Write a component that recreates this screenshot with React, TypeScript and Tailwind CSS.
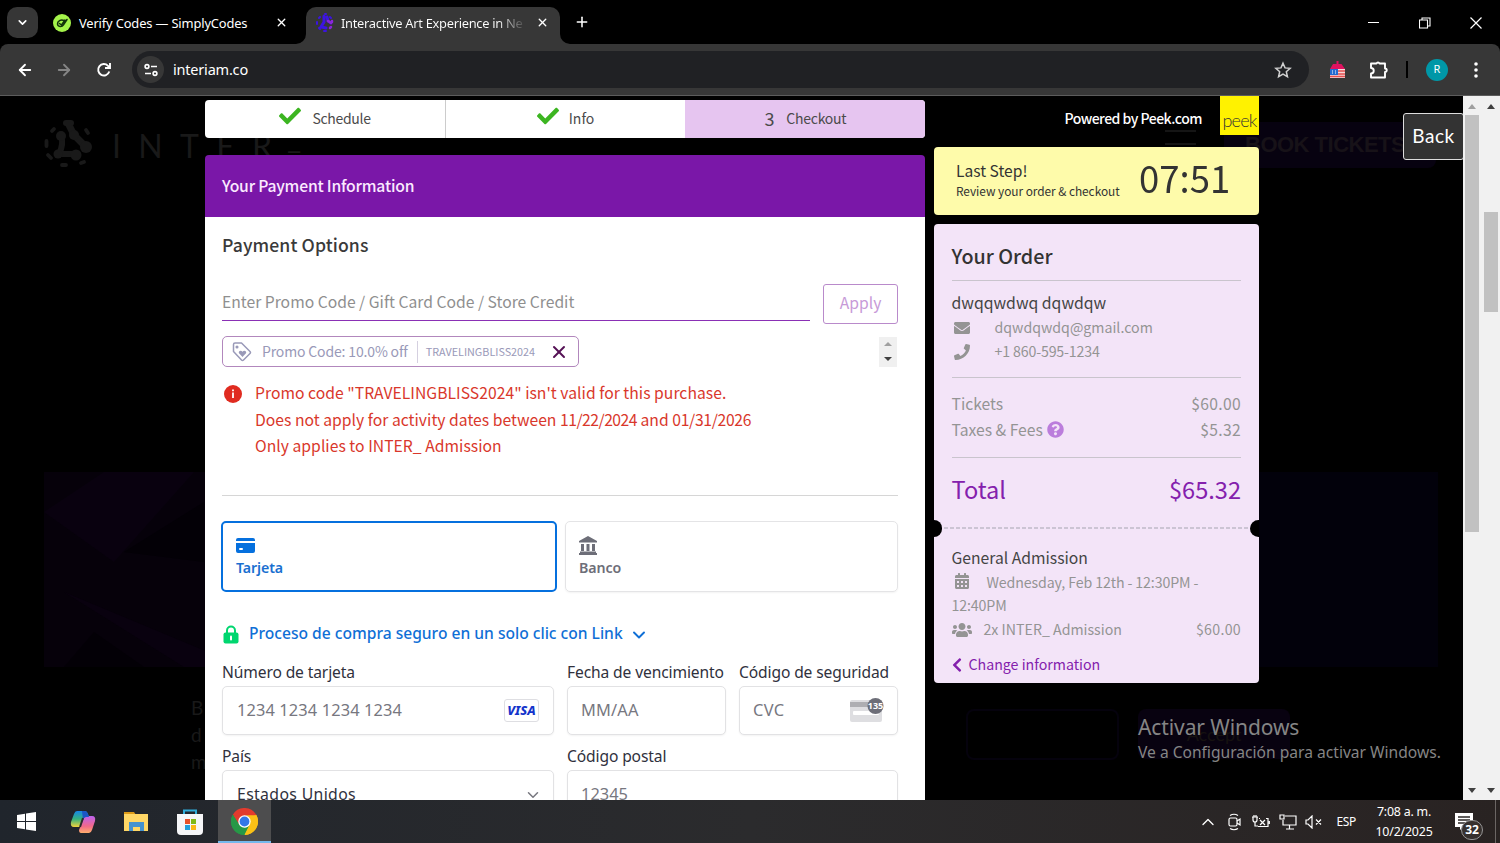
import type { ReactNode } from "react";
import {
    FaCalendarAlt,
    FaCheck,
    FaChevronLeft,
    FaEnvelope,
    FaPhone,
    FaQuestionCircle,
    FaUsers,
} from "react-icons/fa";
import { ArrowLeft, ArrowRight, ChevronDown, ChevronUp, Plus, X } from "lucide-react";

const ui = "font-['Noto_Sans','Open_Sans',sans-serif]";
const peek = "font-['Noto_Sans_CJK_JP','Noto_Sans_CJK_SC',sans-serif]";

function TabBar() {
    return (
        <div className="flex h-11 shrink-0 items-end bg-black text-white">
            <div className="mb-[6px] ml-[7px] flex h-[31px] w-[31px] items-center justify-center rounded-[10px] bg-[#363636]">
                <ChevronDown size={13} strokeWidth={3} />
            </div>
            <div className="flex h-[36px] w-[250px] items-center pb-[7px] pl-[15px]">
                <svg width="18" height="18" viewBox="0 0 18 18" className="shrink-0">
                    <circle cx="9" cy="9" r="9" fill="#a4f34a" />
                    <path d="M11 6.500C8 5 4.300 7 4.500 10c.3 3 4.500 3.300 6 .8L14 5.500M6.500 9.500l2 1.500L12 6" fill="none" stroke="#12330a" strokeWidth="1.500" strokeLinecap="round" />
                </svg>
                <span className="ml-2 w-[190px] text-[12.900px] leading-[20px] tracking-[-0.150px] whitespace-nowrap">Verify Codes — SimplyCodes</span>
                <X size={13} strokeWidth={2.500} className="ml-[6px] shrink-0" />
            </div>
            <div className="relative ml-[18px] flex h-[37px] w-[254px] items-center rounded-t-[10px] bg-[#373737] pb-[5px] pl-[10px]">
                <svg className="absolute bottom-0 -left-[10px]" width="10" height="10"><path d="M10 0v10H0A10 10 0 0 0 10 0Z" fill="#373737" /></svg>
                <svg className="absolute -right-[10px] bottom-0" width="10" height="10"><path d="M0 0v10h10A10 10 0 0 1 0 0Z" fill="#373737" /></svg>
                <svg width="18" height="20" viewBox="0 0 18 20" className="shrink-0">
                    <g fill="none" stroke="#3c14e0" strokeLinecap="round">
                        <path d="M8 3v6l-3 5 5 1M11 4l1 4 3 2" strokeWidth="3" />
                        <path d="M3 5l1-1M1 9v2M3 15l1 1M8 18h2M15 5l-1-1M9 1h1" strokeWidth="2" />
                        <path d="M12 8l3 2M14 15l1-1M16 8v1" stroke="#8a26d8" strokeWidth="2.500" />
                    </g>
                </svg>
                <span className="ml-[7px] h-[20px] w-[184px] overflow-hidden bg-linear-to-r from-white from-85% to-[#444] bg-clip-text text-[12.900px] leading-[20px] tracking-[-0.300px] whitespace-nowrap text-transparent">
                    Interactive Art Experience in Ne
                </span>
                <X size={13} strokeWidth={2.500} className="mt-[-1px] ml-[11px] shrink-0" />
            </div>
            <Plus size={16} strokeWidth={2.300} className="mb-[14px] ml-[14px]" />
            <div className="mb-[15px] ml-auto flex items-center gap-[39px] pr-[18px]">
                <svg width="12" height="12"><path d="M0 5.500h11" stroke="#fff" /></svg>
                <svg width="12" height="12" viewBox="0 0 12 12" fill="none" stroke="#fff" strokeWidth="1.100"><path d="M.5 3h8v8h-8zM3 3V1h8v8H9" /></svg>
                <svg width="12" height="12" viewBox="0 0 12 12" stroke="#fff" strokeWidth="1.200"><path d="M.5.5l11 11M11.500.5l-11 11" /></svg>
            </div>
        </div>
    );
}

function Toolbar() {
    return (
        <div className="flex h-[52px] shrink-0 items-center rounded-t-[8px] border-b border-[#5c5c5c] bg-[#373737] text-white">
            <ArrowLeft size={18} strokeWidth={2.400} className="ml-4" />
            <ArrowRight size={18} strokeWidth={2.400} className="ml-[21px] text-[#858585]" />
            <svg width="16" height="16" viewBox="0 0 16 16" className="ml-[23px]" fill="none" stroke="#fff" strokeWidth="1.900">
                <path d="M13.300 9.500A5.700 5.700 0 1 1 12 3.800l1.500 1.600" />
                <path d="M14 1v5H9" />
            </svg>
            <div className="ml-[20px] flex h-[37px] w-[1177px] items-center rounded-full bg-[#202124] pl-[5px]">
                <div className="flex h-[27px] w-[27px] items-center justify-center rounded-full bg-[#373737]">
                    <svg width="14" height="14" viewBox="0 0 14 14" fill="none" stroke="#fff" strokeWidth="1.600">
                        <circle cx="3" cy="3.500" r="1.900" /><path d="M7 3.500h6M1 10.500h6" /><circle cx="11" cy="10.500" r="1.900" />
                    </svg>
                </div>
                <span className="ml-[9px] text-[14.500px] tracking-[-0.200px]">interiam.co</span>
                <svg width="18" height="18" viewBox="0 0 24 24" className="mr-[17px] ml-auto" fill="none" stroke="#d0d0d0" strokeWidth="2">
                    <path d="M12 3l2.700 6.200 6.800.6-5.100 4.500 1.500 6.700L12 17.500 6.100 21l1.500-6.700-5.100-4.500 6.800-.6z" />
                </svg>
            </div>
            <svg width="17" height="18" viewBox="0 0 17 18" className="ml-[20px]">
                <path d="M7.500 0h2v3h3l3.500 5H1l3-5h3.500z" fill="#e0115f" />
                <path d="M1 8h15v9H1z" fill="#f7d9da" /><path d="M1 8h8v6H1z" fill="#246ad0" />
                <path d="M9 10h7M9 13h7M1 15.500h15" stroke="#e45050" strokeWidth="1.300" />
                <path d="M3 10h1M6 10h1M3 12h1M6 12h1" stroke="#fff" />
            </svg>
            {/* extensions puzzle piece */}
            <svg width="20" height="20" viewBox="0 0 20 20" className="ml-[23px]" fill="none" stroke="#fff" strokeWidth="1.900" strokeLinejoin="round">
                <path d="M2 3.500h5.500a1.600 1.600 0 0 1 3 0H16v5a1.600 1.600 0 0 1 0 3.500v5.500H2V13.500a2.700 2.700 0 0 0 0-5.500z" />
            </svg>
            <div className="ml-[17px] h-[17px] w-[2px] bg-black" />
            <div className="ml-[18px] flex h-[22px] w-[22px] items-center justify-center rounded-full bg-[#0097a7] text-[11px]">R</div>
            <svg width="4" height="18" viewBox="0 0 4 18" className="ml-[26px]" fill="#fff"><circle cx="2" cy="3" r="1.800" /><circle cx="2" cy="9" r="1.800" /><circle cx="2" cy="15" r="1.800" /></svg>
        </div>
    );
}

/* the dimmed site that shows behind the booking overlay */
function SiteBackdrop() {
    return (
        <div className="absolute inset-0 overflow-hidden bg-black font-['Lato',sans-serif] text-[#191919]">
            <svg width="50" height="50" viewBox="0 0 50 50" className="absolute top-[23px] left-[44px]" fill="#191919" stroke="#191919" strokeLinecap="round">
                <path d="M17 17q3 8-2 18M14 35h18" strokeWidth="6" fill="none" />
                <path d="M25 6l5 10 11 11" strokeWidth="7" fill="none" />
                <circle cx="17" cy="17" r="5" stroke="none" /><circle cx="32" cy="36" r="5.500" stroke="none" />
                <circle cx="42" cy="28" r="6" stroke="none" /><circle cx="14" cy="35" r="4.500" stroke="none" />
                <circle cx="30" cy="16" r="5" stroke="none" /><path d="M22 4h5" strokeWidth="6" />
                <path d="M8 12l2-2M2.500 22v5M4 36l3 3M18 46h4M37 44l3-1M42 11l2 3" strokeWidth="3.800" fill="none" />
            </svg>
            <div className="absolute top-[26px] left-[112px] text-[32px] tracking-[17.300px]">INTER</div>
            <div className="absolute top-[18px] left-[287px] text-[31px]">_</div>
            <div className="absolute top-[26px] left-[1224px] h-[46px] w-[212px] rounded-lg bg-[#070210]" />
            <div className="absolute top-[32px] left-[1245px] font-['Liberation_Sans',sans-serif] text-[22px] font-bold tracking-[-0.500px] text-[#171218]">BOOK TICKETS</div>
            <div className="absolute top-[34px] left-[1165px] h-[15px] w-[31px] border-y-2 border-[#151515]" />
            <div className="absolute top-[376px] left-[44px] h-[195px] w-[300px] bg-[#06010a]">
                <svg width="300" height="195"><path d="M0 40L60 0h90L70 90zM20 120l120 75h60z" fill="#09010f" /><path d="M80 80l80-50v60zM50 160l50 35H20z" fill="#030006" /></svg>
            </div>
            <div className="absolute top-[376px] left-[1100px] h-[195px] w-[338px] bg-[#02010b]" />
            <div className="absolute top-[598px] left-[191px] text-[19px] leading-[27px]">B<br />d<br />m</div>
            <div className="absolute top-[613px] left-[966px] h-[51px] w-[153px] rounded-lg border-2 border-[#05020d]" />
            <div className="absolute top-[613px] left-[1138px] flex h-[50px] w-[152px] items-center justify-center rounded-lg bg-[#080210] text-[18px] text-[#161210]">Accept</div>
        </div>
    );
}

function Steps() {
    return (
        <div className="flex h-[38px] shrink-0 overflow-hidden rounded-[4px] bg-white pb-[2px] text-[14px] leading-[20px] text-[#4b4b4b]">
            <div className="-mb-[2px] flex w-[241px] items-center justify-center gap-[11px] border-r border-[#ccc] pb-[2px] tracking-[-0.300px]">
                <FaCheck size={22} className="mt-[-4px] text-[#3cb521]" />Schedule
            </div>
            <div className="flex w-[239px] items-center justify-center gap-[10px]">
                <FaCheck size={22} className="mt-[-4px] text-[#3cb521]" />Info
            </div>
            <div className="-mb-[2px] flex w-[240px] items-center justify-center gap-[12px] bg-[#e6c5f0] pr-px pb-[2px] pl-[2px] tracking-[-0.250px]">
                <span className="text-[18px]">3</span>Checkout
            </div>
        </div>
    );
}

function PromoCode() {
    return (
        <>
            <div className="mt-[25px] flex h-[40px] justify-between">
                <div className="h-[37px] w-[588px] border-b border-[#8a30b5] text-[15.700px] leading-[36px] text-[#8f8f8f]">
                    Enter Promo Code / Gift Card Code / Store Credit
                </div>
                <button className="w-[75px] rounded-[3px] border border-[#b98acb] pb-[2px] text-[15.700px] text-[#c79ad8]">Apply</button>
            </div>
            <div className="mt-[12px] flex items-center justify-between">
                <div className="flex h-[31px] w-[357px] items-center rounded-[5px] border border-[#b287bd] text-[#9999b8]">
                    <svg width="20" height="20" viewBox="0 0 20 20" className="ml-[9px]" fill="none" stroke="currentColor" strokeWidth="1.500" strokeLinejoin="round">
                        <path d="M1.500 2.500Q1.500 1 3 1h6.500l8.500 8.500q1 1 0 2l-6.500 6.500q-1 1-2 0L1.500 9.500z" />
                        <circle cx="5" cy="5" r=".8" fill="currentColor" />
                        <path d="M10.500 15L7 11.200c-1-1.700 1.700-3.700 3.500-1.500 1.800-2.200 4.500-.2 3.500 1.500z" fill="currentColor" stroke="none" />
                    </svg>
                    <span className="ml-[10px] text-[14px] tracking-[-0.150px]">Promo Code: 10.0% off</span>
                    <span className="ml-[9px] h-[22px] w-px bg-[#d5d0e0]" />
                    <span className="ml-[8px] text-[10.800px]">TRAVELINGBLISS2024</span>
                    <X size={20} strokeWidth={2.400} className="ml-[14px] text-[#551155]" />
                </div>
                <div className="mr-px flex h-[30px] w-[18px] flex-col items-center justify-around bg-[#f0f0f0]">
                    <span className="border-x-4 border-b-4 border-x-transparent border-b-[#a0a0a0]" />
                    <span className="border-x-4 border-t-4 border-x-transparent border-t-[#404040]" />
                </div>
            </div>
            <div className="mt-[13px] flex h-[80px] text-[15.700px] leading-[26.500px] text-[#d9372b]">
                <svg width="18" height="18" viewBox="0 0 18 18" className="mt-[5px] mr-[13px] ml-[2px]">
                    <circle cx="9" cy="9" r="9" fill="#e02b20" /><path d="M9 7.500v5.500M9 4.500v1.800" stroke="#fff" strokeWidth="1.800" />
                </svg>
                <div>
                    <p className="tracking-[0.030px]">Promo code "TRAVELINGBLISS2024" isn't valid for this purchase.</p>
                    <p className="tracking-[0.020px]">Does not apply for activity dates between <span className="tracking-[-0.500px]">11/22/2024</span> and <span className="tracking-[-0.300px]">01/31/2026</span></p>
                    <p className="tracking-[0.030px]">Only applies to INTER_ Admission</p>
                </div>
            </div>
        </>
    );
}

function Field({ label, width, children }: { label: string; width: string; children: ReactNode }) {
    return (
        <div className={`flex flex-col ${width}`}>
            <div className="h-[27px] text-[15.600px] leading-[26px] tracking-[-0.120px] whitespace-nowrap text-[#30313d]">{label}</div>
            <div className="flex h-[49px] items-center rounded-[5px] border border-[#e2e2e4] bg-white px-[14px] text-[16.400px] text-[#77777f] shadow-xs">
                {children}
            </div>
        </div>
    );
}

function CardForm() {
    return (
        <div className={ui}>
            <div className="-ml-px flex h-[71px] gap-[8px] text-[14.200px] font-semibold">
                <div className="flex w-[336px] flex-col rounded-[5px] border-2 border-[#0570de] px-[13px] pt-[15px] text-[#1a6fd0]">
                    <svg width="19" height="15" viewBox="0 0 19 15" fill="#0570de"><path d="M0 3V2q0-2 2-2h15q2 0 2 2v1zM0 5h19v8q0 2-2 2H2q-2 0-2-2z" /><rect x="3" y="10" width="4" height="2" rx="1" fill="#fff" /></svg>
                    <span className="mt-[5px] leading-[20px] tracking-[-0.100px]">Tarjeta</span>
                </div>
                <div className="flex w-[333px] flex-col rounded-[5px] border border-[#e4e4e6] px-[13px] pt-[14px] text-[#6d6e78] shadow-xs">
                    <svg width="18" height="19" viewBox="0 0 18 19" fill="#6d6e78"><path d="M9 0l9 5v1.500H0V5zM2 8h3v7H2zM7.500 8h3v7h-3zM13 8h3v7h-3zM1 15.500h16V17h1v2H0v-2h1z" /></svg>
                    <span className="mt-[3px] leading-[20px] tracking-[-0.100px]">Banco</span>
                </div>
            </div>
            <div className="mt-[29px] flex h-[26px] items-center text-[15.600px] font-medium text-[#0f6fd6]">
                <svg width="16" height="19" viewBox="0 0 16 19" className="mr-[10px] ml-px"><path d="M4 9V5.500a4 4 0 0 1 8 0V9" fill="none" stroke="#00d66f" strokeWidth="2" /><rect x=".5" y="7.500" width="15" height="11" rx="2" fill="#00d66f" /><path d="M8 11.500v3" stroke="#fff" strokeWidth="2" strokeLinecap="round" /></svg>
                <span>Proceso de compra seguro en un solo clic con Link</span>
                <ChevronDown size={20} strokeWidth={2.300} className="mt-[2px] ml-[6px]" />
            </div>
            <div className="mt-[12px] flex gap-[13px]">
                <Field label="Número de tarjeta" width="w-[332px]">
                    <span className="mr-auto tracking-[0.120px]">1234 1234 1234 1234</span>
                    <span className="flex h-[23px] w-[35px] items-center justify-center rounded-[3px] border border-[#dedee2] text-[13px] font-extrabold text-[#1434cb] italic">VISA</span>
                </Field>
                <Field label="Fecha de vencimiento" width="w-[159px]"><span className="-ml-px tracking-[0.150px]">MM/AA</span></Field>
                <Field label="Código de seguridad" width="w-[159px]">
                    <span className="mr-auto -ml-px tracking-[0.300px]">CVC</span>
                    <svg width="34" height="25" viewBox="0 0 34 25" className="mr-[-1px]">
                        <rect y="2" width="32" height="22" rx="2" fill="#dedee1" /><path d="M0 4h32v5H0z" fill="#aeaeb2" /><rect x="3" y="13" width="26" height="4" rx="1" fill="#fff" />
                        <circle cx="25.500" cy="8" r="8" fill="#6d6e78" />
                        <text x="25.500" y="11.200" textAnchor="middle" fontSize="9" fontWeight="700" fill="#fff">135</text>
                    </svg>
                </Field>
            </div>
            <div className="mt-[8px] flex gap-[13px]">
                <Field label="País" width="w-[332px]">
                    <span className="mr-auto text-[15.800px] tracking-[0.350px] text-[#30313d]">Estados Unidos</span>
                    <ChevronDown size={18} strokeWidth={2} className="mr-[-3px]" />
                </Field>
                <Field label="Código postal" width="w-[331px]"><span className="-ml-px">12345</span></Field>
            </div>
        </div>
    );
}

function PaymentPanel() {
    return (
        <div className="mt-[17px] flex shrink-0 flex-col">
            <div className="h-[62px] rounded-t-[4px] bg-[#7a17a8] pl-[17px] text-[15.700px] leading-[61px] font-medium tracking-[-0.200px] text-[#fbeaff]">Your Payment Information</div>
            <div className="h-[583px] bg-white pt-[14px] pr-[27px] pl-[17px]">
                <h2 className="h-[28px] text-[17.600px] leading-[28px] font-medium tracking-[0.100px] text-[#3a3a3a]">Payment Options</h2>
                <PromoCode />
                <div className="mt-[35px] mb-[25px] h-px w-[676px] bg-[#d6d6d6]" />
                <CardForm />
            </div>
        </div>
    );
}

function Amount({ label, value }: { label: ReactNode; value: string }) {
    return (
        <div className="flex h-[26px] items-center justify-between text-[15.700px]">
            <span className="flex items-center gap-[4px]">{label}</span>
            <span className="tracking-[0.300px]">{value}</span>
        </div>
    );
}

function OrderSummary() {
    return (
        <aside className="ml-[9px] flex w-[325px] flex-col">
            <div className="flex h-[51px] items-start justify-end text-[14px] font-medium text-white">
                <span className="mt-[12px] mr-[18px] leading-[21px] tracking-[-0.500px]">Powered by Peek.com</span>
                <div className="flex h-[39px] w-[39px] items-end justify-center bg-[#fff200] pb-[5px] font-['Lato',sans-serif] text-[18px] leading-[20px] font-light tracking-[-0.800px] text-[#333]">peek</div>
            </div>
            <div className="flex h-[68px] items-center rounded-[4px] bg-[#fefbaa] pl-[22px] text-[#333]">
                <div className="-mt-[2px] w-[183px]">
                    <div className="text-[15.600px] leading-[21px]">Last Step!</div>
                    <div className="text-[11.900px] leading-[19px] tracking-[-0.050px] whitespace-nowrap">Review your order &amp; checkout</div>
                </div>
                <span className="mt-[-4px] origin-bottom scale-y-105 text-[36.500px] leading-[60px]">07:51</span>
            </div>
            <div className="relative mt-[9px] h-[459px] rounded-[4px] bg-[#f3e4f8] pt-[18px] pr-[18px] pl-[17.500px] text-[#949494]">
                <h2 className="-mt-px h-[39px] text-[19.700px] leading-[30px] font-medium text-[#333]">Your Order</h2>
                <div className="border-t border-[#c9c4cd] pt-[9px]">
                    <div className="text-[15.800px] leading-[25px] text-[#444]">dwqqwdwq dqwdqw</div>
                    <div className="mt-px flex h-[24px] items-center text-[14.200px]"><FaEnvelope size={16} className="mr-[25px] ml-[2px]" />dqwdqwdq@gmail.com</div>
                    <div className="flex h-[24px] items-center text-[14.200px] tracking-[-0.150px]"><FaPhone size={16} className="mr-[25px] ml-[2px]" />+1 860-595-1234</div>
                </div>
                <div className="mt-[13px] border-t border-[#c9c4cd] pt-[13px]">
                    <Amount label="Tickets" value="$60.00" />
                    <Amount label={<>Taxes &amp; Fees <FaQuestionCircle size={17} className="text-[#bb7ddc]" /></>} value="$5.32" />
                </div>
                <div className="mt-[14px] flex h-[70px] items-center justify-between border-t border-[#c9c4cd] pb-[5px] text-[23.600px] text-[#8420ad]">
                    <span>Total</span><span>$65.32</span>
                </div>
                <div className="-mx-[8px] h-[2px] bg-[repeating-linear-gradient(90deg,#ccc4d4_0_4px,transparent_4px_6px)]" />
                <div className="absolute top-[296px] left-0 h-[17px] w-[8px] rounded-r-full bg-black" />
                <div className="absolute top-[296px] right-0 h-[17px] w-[9px] rounded-l-full bg-black" />
                <div className="pt-[16px] text-[14.200px] leading-[23px]">
                    <div className="text-[15.700px] leading-[25px] text-[#444]">General Admission</div>
                    <div className="mt-px tracking-[-0.120px]"><FaCalendarAlt size={16} className="mr-[17px] ml-[2px] inline align-[-1px]" />Wednesday, Feb 12th - 12:30PM - 12:40PM</div>
                    <div className="mt-px flex items-center"><FaUsers size={20} className="mr-[12px]" />2x INTER_ Admission<span className="ml-auto tracking-[0.300px]">$60.00</span></div>
                </div>
                <div className="mt-[12px] flex items-center text-[14.200px] leading-[23px] text-[#8420ad]"><FaChevronLeft size={16} className="mr-[4px] -ml-[3px]" />Change information</div>
            </div>
        </aside>
    );
}

function ScrollBar({ width, up, thumb }: { width: string; up: string; thumb: string }) {
    return (
        <div className={`flex flex-col items-center bg-[#f1f1f1] ${width}`}>
            <span className={`mt-[8px] border-x-4 border-b-[5px] border-x-transparent ${up}`} />
            <div className={`w-[14px] bg-[#c1c1c1] ${thumb}`} />
            <span className="mt-auto mb-[7px] border-x-4 border-t-[5px] border-x-transparent border-t-[#404040]" />
        </div>
    );
}

function TaskBar() {
    return (
        <div className="flex h-[43px] shrink-0 items-center bg-linear-to-r from-[#20252c] via-[#2b2b2d] to-[#292322] text-white">
            <svg width="19" height="19" viewBox="0 0 19 19" className="ml-[17px]" fill="#fff"><path d="M0 3l8-1.200V9H0zM9 1.600L19 0v9H9zM0 10h8v7.200L0 16zM9 10h10v9L9 17.400z" /></svg>
            <svg width="26" height="24" viewBox="0 0 26 24" className="ml-[34px]">
                <defs>
                    <linearGradient id="cpA" x1="0" y1="0" x2="0" y2="1"><stop stopColor="#1687e8" /><stop offset=".5" stopColor="#35b27d" /><stop offset="1" stopColor="#f2d33c" /></linearGradient>
                    <linearGradient id="cpB" x1="0" y1="0" x2="0" y2="1"><stop stopColor="#bc62ef" /><stop offset=".6" stopColor="#f2698a" /><stop offset="1" stopColor="#ffae6c" /></linearGradient>
                </defs>
                <path d="M7 1h8q2 0 3 3l1 3h-3q-2 0-3 3l-2 7H4q-4 0-3-5l3-8q1-3 3-3z" fill="url(#cpA)" />
                <path d="M19 23h-8q-2 0-2-3l5-12q1-2 3-2h5q4 0 3 5l-3 9q-1 3-3 3z" fill="url(#cpB)" />
                <path d="M12 1h3q2 0 3 3l1 3h-3q-2 0-3 3z" fill="#1a56c6" />
                <path d="M13 8l-3 9" stroke="#2b2b2d" strokeWidth="2" />
            </svg>
            <svg width="25" height="21" viewBox="0 0 25 21" className="ml-[28px]"><path d="M0 1h10l2 3H0z" fill="#dd9b18" /><path d="M0 3h24v17H0z" fill="#ffd766" /><path d="M5 20v-9h15v9h-4v-4H9v4z" fill="#4492d0" /></svg>
            <svg width="26" height="26" viewBox="0 0 26 26" className="ml-[28px]">
                <path d="M7 6V1.500h12V6" fill="none" stroke="#31acd9" strokeWidth="2" />
                <path d="M0 5h26v17q0 4-4 4H4q-4 0-4-4z" fill="#f5f6f8" />
                <path d="M8 10h5v5H8z" fill="#e95128" /><path d="M14 10h5v5h-5z" fill="#80b916" /><path d="M8 16h5v5H8z" fill="#229fdc" /><path d="M14 16h5v5h-5z" fill="#fab915" />
            </svg>
            <div className="ml-[15px] flex h-full w-[53px] items-center justify-center border-b-2 border-[#76b9ed] bg-[#4d4d4e] pt-[2px]">
                <svg width="27" height="27" viewBox="0 0 48 48">
                    <path d="M24 24L3.200 12A24 24 0 0 1 44.800 12z" fill="#e33b2e" />
                    <path d="M24 24l20.800-12A24 24 0 0 1 24 48z" fill="#fbc116" />
                    <path d="M24 24v24A24 24 0 0 1 3.200 12z" fill="#279847" />
                    <path d="M24 13h21.300L44.800 12H24zM14.500 29.500L24 13H3.800z" fill="#e33b2e" />
                    <path d="M3.200 12L14.500 29.500A11 11 0 0 0 33.500 29.500L24 48A24 24 0 0 1 3.200 12z" fill="#279847" />
                    <path d="M45.300 13A24 24 0 0 1 24 48l9.500-18.500A11 11 0 0 0 24 13z" fill="#fbc116" />
                    <circle cx="24" cy="24" r="11" fill="#fff" /><circle cx="24" cy="24" r="8.700" fill="#3477e8" />
                </svg>
            </div>
            <ChevronUp size={20} strokeWidth={1.600} className="ml-auto" />
            <svg width="14" height="18" viewBox="0 0 14 18" className="ml-[10px]" fill="none" stroke="#fff" strokeWidth="1.200"><rect x="1" y="5" width="8" height="8" rx="1.500" /><path d="M9 8l3-2v6l-3-2M2 2.500q4-2.500 8 0M2 15.500q4 2.500 8 0" /></svg>
            <svg width="18" height="14" viewBox="0 0 18 14" className="ml-[10px]" fill="none" stroke="#fff" strokeWidth="1.200"><path d="M1 2v3q0 2 2 2t2-2V2M0 2h6M2 0v2M4 0v2M3 7v4h3M7 3.500h1M14 3.500h2v8H6M17.300 6v3" /><path d="M8 5l5 5M13 5l-5 5" /></svg>
            <svg width="18" height="16" viewBox="0 0 18 16" className="ml-[9px]" fill="none" stroke="#fff" strokeWidth="1.200"><path d="M6 2h11v9H4V6M10.500 11v4M7 15h8" /><path d="M1 1h4v4H1z" /></svg>
            <svg width="17" height="14" viewBox="0 0 17 14" className="ml-[8px]" fill="none" stroke="#fff" strokeWidth="1.200"><path d="M1 5v4h2l4 4V1L3 5zM11 4.500l5 5M16 4.500l-5 5" /></svg>
            <span className="ml-[14px] text-[12px] tracking-[-0.300px]">ESP</span>
            <div className="ml-[18px] w-[60px] text-center text-[12.400px] leading-[20px] tracking-[-0.200px] whitespace-nowrap">7:08 a. m.<br />10/2/2025</div>
            <div className="relative ml-[21px] h-[28px] w-[30px]">
                <svg width="18" height="19" viewBox="0 0 18 19" className="mt-[4px]"><path d="M0 1h18v14H8l-3 3v-3H0z" fill="#fff" /><path d="M3 5h12M3 8h12M3 11h8" stroke="#2b2726" strokeWidth="1.300" /></svg>
                <span className="absolute top-[12px] left-[6px] flex h-[20px] w-[22px] items-center justify-center rounded-full border border-[#969696] bg-[#37312f] text-[12px] font-bold">32</span>
            </div>
            <div className="ml-[10px] h-full w-px bg-[#6b6664]" />
            <div className="w-[4px]" />
        </div>
    );
}

export default function App() {
    return (
        <div className={`flex h-[843px] w-[1500px] flex-col overflow-hidden bg-black ${ui}`}>
            <TabBar />
            <Toolbar />
            <div className="relative h-[704px] shrink-0 overflow-hidden">
                <SiteBackdrop />
                <div className="relative flex h-full">
                    <main className={`ml-[205px] flex h-[704px] w-[720px] shrink-0 flex-col overflow-hidden pt-[4px] ${peek}`}>
                        <Steps />
                        <PaymentPanel />
                    </main>
                    <div className={`flex ${peek}`}><OrderSummary /></div>
                    <button className="mt-[17px] -mr-px ml-auto h-[47px] w-[61px] rounded-[3px] border border-[#ddd] bg-[#333] font-['Lato',sans-serif] text-[19px] tracking-[0.500px] text-white">Back</button>
                    <ScrollBar width="w-[18px]" up="border-b-[#a0a0a0]" thumb="mt-[6px] h-[417px]" />
                    <ScrollBar width="w-[19px]" up="border-b-[#404040]" thumb="mt-[103px] h-[100px]" />
                </div>
                <div className="absolute top-[617px] left-[1138px] whitespace-nowrap text-[#858585]">
                    <div className="text-[21px] leading-[29px] tracking-[-0.100px]">Activar Windows</div>
                    <div className="text-[15.600px] leading-[21px]">Ve a Configuración para activar Windows.</div>
                </div>
            </div>
            <TaskBar />
        </div>
    );
}
